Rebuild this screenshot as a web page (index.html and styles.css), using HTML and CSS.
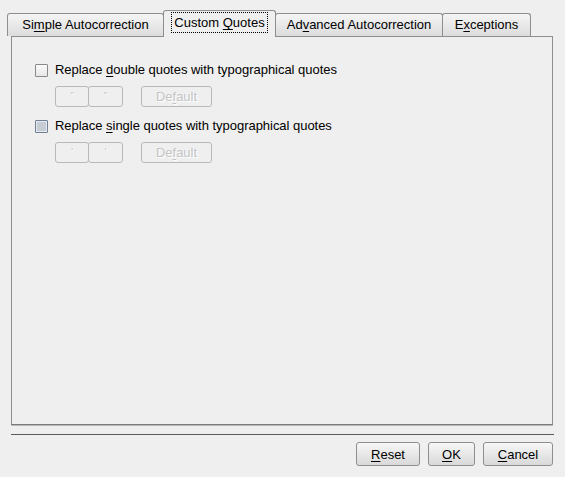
FILE: index.html
```html
<!DOCTYPE html>
<html>
<head>
<meta charset="utf-8">
<link rel="stylesheet" href="styles.css">
</head>
<body>
<div class="dialog">
  <div class="tabs">
    <div class="tab t1">Si<u>m</u>ple Autocorrection</div>
    <div class="tab t2 active"><span class="focus">Custom <u>Q</u>uotes</span></div>
    <div class="tab t3">Ad<u>v</u>anced Autocorrection</div>
    <div class="tab t4">E<u>x</u>ceptions</div>
  </div>
  <div class="panel">
    <div class="check-row">
      <span class="cb"></span>
      <span class="label">Replace <u>d</u>ouble quotes with typographical quotes</span>
    </div>
    <div class="btn-row">
      <div class="pair">
        <span class="dbtn q">"</span><span class="dbtn q">"</span>
      </div>
      <span class="dbtn def">De<u>f</u>ault</span>
    </div>
    <div class="check-row">
      <span class="cb hover"></span>
      <span class="label">Replace <u>s</u>ingle quotes with typographical quotes</span>
    </div>
    <div class="btn-row">
      <div class="pair">
        <span class="dbtn q">'</span><span class="dbtn q">'</span>
      </div>
      <span class="dbtn def">De<u>f</u>ault</span>
    </div>
  </div>
  <div class="sep"></div>
  <div class="actions">
    <button class="btn reset"><u>R</u>eset</button>
    <button class="btn ok"><u>O</u>K</button>
    <button class="btn cancel"><u>C</u>ancel</button>
  </div>
</div>
</body>
</html>
```
FILE: styles.css
```css
html, body {
  margin: 0;
  padding: 0;
  background: #efefef;
  font-family: "Liberation Sans", Arial, sans-serif;
  font-size: 13px;
  color: #000;
}
u { text-decoration: underline; text-underline-offset: 2px; }
.dialog {
  width: 565px;
  height: 477px;
  display: flex;
  flex-direction: column;
}
.tabs {
  display: flex;
  align-items: flex-end;
  height: 37px;
  margin-left: 7px;
  position: relative;
  z-index: 1;
}
.tab {
  box-sizing: border-box;
  height: 23px;
  border: 1px solid #8e8e8e;
  border-bottom: none;
  border-radius: 3px 3px 0 0;
  background: linear-gradient(#f5f5f5, #dcdcdc);
  display: flex;
  align-items: center;
  justify-content: center;
  padding-bottom: 1px;
  margin-bottom: 1px;
}
.t1 { width: 157px; }
.t2 { width: 113px; }
.t3 { width: 168px; margin-left: -1px; }
.t4 { width: 89px; margin-left: -1px; }
.tab.active {
  height: 27px;
  margin-bottom: 0;
  background: #efefef;
  margin-left: -1px;
  padding-bottom: 3px;
}
.focus {
  outline: 1px dotted #000;
  outline-offset: 1px;
  padding: 0 1px;
  line-height: 17px;
}
.panel {
  box-sizing: border-box;
  margin: -1px 12px 0 11px;
  height: 389px;
  border: 1px solid #8e8e8e;
  border-bottom-color: #7a7a7a;
  box-shadow: 0 1px 0 #b8b8b8;
  padding: 26px 0 0 23px;
  display: flex;
  flex-direction: column;
}
.check-row {
  display: flex;
  align-items: center;
  height: 14px;
}
.cb {
  box-sizing: border-box;
  width: 13px;
  height: 13px;
  border: 1px solid #8a8a8a;
  border-radius: 1px;
  background: linear-gradient(#fafafa, #e8e8e8);
  margin-right: 7px;
}
.cb.hover {
  border-color: #6f8196;
  background: #c5ccd3;
  box-shadow: inset 0 0 0 1px #e6eaee;
}
.label { line-height: 14px; letter-spacing: -0.03px; }
.btn-row {
  display: flex;
  margin: 9px 0 12px 20px;
  height: 21px;
}
.pair { display: flex; }
.dbtn {
  box-sizing: border-box;
  height: 21px;
  border: 1px solid #b9b9b9;
  border-radius: 3px;
  color: #c4c4c4;
  text-shadow: 1px 1px 0 #fff;
  display: flex;
  align-items: center;
  justify-content: center;
  font-size: 13px;
}
.dbtn.q { width: 34px; font-size: 9px; padding-bottom: 4px; }
.dbtn.q + .dbtn.q { margin-left: -1px; width: 35px; }
.dbtn.def { width: 71px; margin-left: 18px; }
.sep {
  margin: 9px 0 0 11px;
  height: 1px;
  background: #5a5a5a;
  width: 543px;
}
.actions {
  display: flex;
  justify-content: flex-end;
  gap: 8px;
  margin: 7px 12px 0 0;
}
.btn {
  box-sizing: border-box;
  height: 24px;
  border: 1px solid #8e8e8e;
  border-radius: 3px;
  background: linear-gradient(#f7f7f7, #d9d9d9);
  font-family: "Liberation Sans", Arial, sans-serif;
  font-size: 13px;
  color: #000;
  padding: 0;
}
.reset { width: 64px; }
.ok { width: 47px; }
.cancel { width: 70px; }
```
